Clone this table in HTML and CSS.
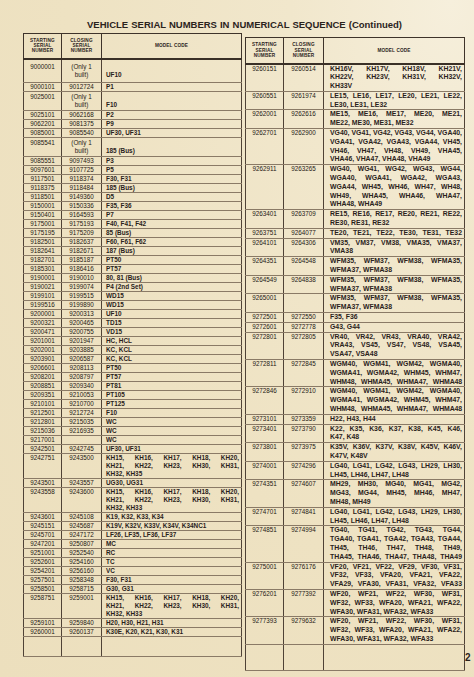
FILE: index.html
```html
<!DOCTYPE html>
<html lang="en">
<head>
<meta charset="utf-8">
<title>Vehicle Serial Numbers in Numerical Sequence (Continued)</title>
<link rel="stylesheet" href="styles.css">
</head>
<body>
<div class="page">
  <h1 class="title">VEHICLE SERIAL NUMBERS IN NUMERICAL SEQUENCE (Continued)</h1>
  <div class="tables">
    <table class="tbl tbl-left">
      <colgroup><col class="c1"><col class="c2"><col></colgroup>
      <thead>
        <tr><th>STARTING<br>SERIAL<br>NUMBER</th><th>CLOSING<br>SERIAL<br>NUMBER</th><th>MODEL CODE</th></tr>
      </thead>
      <tbody>
        <tr class="t1"><td class="sn">9000001</td><td class="sn">(Only 1<br>built)</td><td class="mc bot">UF10</td></tr>
        <tr><td class="sn">9000101</td><td class="sn">9012724</td><td class="mc">P1</td></tr>
        <tr class="t2"><td class="sn">9025001</td><td class="sn">(Only 1<br>built)</td><td class="mc bot">F10</td></tr>
        <tr><td class="sn">9025101</td><td class="sn">9062168</td><td class="mc">P2</td></tr>
        <tr><td class="sn">9062201</td><td class="sn">9081375</td><td class="mc">P9</td></tr>
        <tr><td class="sn">9085001</td><td class="sn">9085540</td><td class="mc">UF30, UF31</td></tr>
        <tr class="t2"><td class="sn">9085541</td><td class="sn">(Only 1<br>built)</td><td class="mc bot">185 (Bus)</td></tr>
        <tr><td class="sn">9085551</td><td class="sn">9097493</td><td class="mc">P3</td></tr>
        <tr><td class="sn">9097601</td><td class="sn">9107725</td><td class="mc">P5</td></tr>
        <tr><td class="sn">9117501</td><td class="sn">9118374</td><td class="mc">F30, F31</td></tr>
        <tr><td class="sn">9118375</td><td class="sn">9118484</td><td class="mc">185 (Bus)</td></tr>
        <tr><td class="sn">9118501</td><td class="sn">9149360</td><td class="mc">D5</td></tr>
        <tr><td class="sn">9150001</td><td class="sn">9150336</td><td class="mc">F35, F36</td></tr>
        <tr><td class="sn">9150401</td><td class="sn">9164593</td><td class="mc">P7</td></tr>
        <tr><td class="sn">9175001</td><td class="sn">9175193</td><td class="mc">F40, F41, F42</td></tr>
        <tr><td class="sn">9175195</td><td class="sn">9175209</td><td class="mc">85 (Bus)</td></tr>
        <tr><td class="sn">9182501</td><td class="sn">9182637</td><td class="mc">F60, F61, F62</td></tr>
        <tr><td class="sn">9182641</td><td class="sn">9182671</td><td class="mc">187 (Bus)</td></tr>
        <tr><td class="sn">9182701</td><td class="sn">9185187</td><td class="mc">PT50</td></tr>
        <tr><td class="sn">9185301</td><td class="sn">9186416</td><td class="mc">PT57</td></tr>
        <tr><td class="sn">9190001</td><td class="sn">9190010</td><td class="mc">80, 81 (Bus)</td></tr>
        <tr><td class="sn">9190021</td><td class="sn">9199074</td><td class="mc">P4 (2nd Set)</td></tr>
        <tr><td class="sn">9199101</td><td class="sn">9199515</td><td class="mc">WD15</td></tr>
        <tr><td class="sn">9199516</td><td class="sn">9199890</td><td class="mc">WD15</td></tr>
        <tr><td class="sn">9200001</td><td class="sn">9200313</td><td class="mc">UF10</td></tr>
        <tr><td class="sn">9200321</td><td class="sn">9200465</td><td class="mc">TD15</td></tr>
        <tr><td class="sn">9200471</td><td class="sn">9200755</td><td class="mc">VD15</td></tr>
        <tr><td class="sn">9201001</td><td class="sn">9201947</td><td class="mc">HC, HCL</td></tr>
        <tr><td class="sn">9202001</td><td class="sn">9203885</td><td class="mc">KC, KCL</td></tr>
        <tr><td class="sn">9203901</td><td class="sn">9206587</td><td class="mc">KC, KCL</td></tr>
        <tr><td class="sn">9206601</td><td class="sn">9208113</td><td class="mc">PT50</td></tr>
        <tr><td class="sn">9208201</td><td class="sn">9208797</td><td class="mc">PT57</td></tr>
        <tr><td class="sn">9208851</td><td class="sn">9209340</td><td class="mc">PT81</td></tr>
        <tr><td class="sn">9209351</td><td class="sn">9210053</td><td class="mc">PT105</td></tr>
        <tr><td class="sn">9210101</td><td class="sn">9210700</td><td class="mc">PT125</td></tr>
        <tr><td class="sn">9212501</td><td class="sn">9212724</td><td class="mc">F10</td></tr>
        <tr><td class="sn">9212801</td><td class="sn">9215035</td><td class="mc">WC</td></tr>
        <tr><td class="sn">9215036</td><td class="sn">9216935</td><td class="mc">WC</td></tr>
        <tr><td class="sn">9217001</td><td class="sn"></td><td class="mc">WC</td></tr>
        <tr><td class="sn">9242501</td><td class="sn">9242745</td><td class="mc">UF30, UF31</td></tr>
        <tr><td class="sn">9242751</td><td class="sn">9243500</td><td class="mc"><span class="l j">KH15, KH16, KH17, KH18, KH20,</span><span class="l j">KH21, KH22, KH23, KH30, KH31,</span><span class="l">KH32, KH35</span></td></tr>
        <tr><td class="sn">9243501</td><td class="sn">9243557</td><td class="mc">UG30, UG31</td></tr>
        <tr><td class="sn">9243558</td><td class="sn">9243600</td><td class="mc"><span class="l j">KH15, KH16, KH17, KH18, KH20,</span><span class="l j">KH21, KH22, KH23, KH30, KH31,</span><span class="l">KH32, KH33</span></td></tr>
        <tr><td class="sn">9243601</td><td class="sn">9245108</td><td class="mc">K19, K32, K33, K34</td></tr>
        <tr><td class="sn">9245151</td><td class="sn">9245687</td><td class="mc">K19V, K32V, K33V, K34V, K34NC1</td></tr>
        <tr><td class="sn">9245701</td><td class="sn">9247172</td><td class="mc">LF26, LF35, LF36, LF37</td></tr>
        <tr><td class="sn">9247201</td><td class="sn">9250807</td><td class="mc">MC</td></tr>
        <tr><td class="sn">9251001</td><td class="sn">9252540</td><td class="mc">RC</td></tr>
        <tr><td class="sn">9252601</td><td class="sn">9254160</td><td class="mc">TC</td></tr>
        <tr><td class="sn">9254201</td><td class="sn">9256160</td><td class="mc">VC</td></tr>
        <tr><td class="sn">9257501</td><td class="sn">9258348</td><td class="mc">F30, F31</td></tr>
        <tr><td class="sn">9258501</td><td class="sn">9258715</td><td class="mc">G30, G31</td></tr>
        <tr><td class="sn">9258751</td><td class="sn">9259001</td><td class="mc"><span class="l j">KH15, KH16, KH17, KH18, KH20,</span><span class="l j">KH21, KH22, KH23, KH30, KH31,</span><span class="l">KH32, KH33</span></td></tr>
        <tr><td class="sn">9259101</td><td class="sn">9259840</td><td class="mc">H20, H30, H21, H31</td></tr>
        <tr><td class="sn">9260001</td><td class="sn">9260137</td><td class="mc">K30E, K20, K21, K30, K31</td></tr>
        <tr class="empty"><td></td><td></td><td></td></tr>
      </tbody>
    </table>

    <table class="tbl tbl-right">
      <colgroup><col class="c1"><col class="c2"><col></colgroup>
      <thead>
        <tr><th>STARTING<br>SERIAL<br>NUMBER</th><th>CLOSING<br>SERIAL<br>NUMBER</th><th>MODEL CODE</th></tr>
      </thead>
      <tbody>
        <tr><td class="sn">9260151</td><td class="sn">9260514</td><td class="mc"><span class="l j">KH16V, KH17V, KH18V, KH21V,</span><span class="l j">KH22V, KH23V, KH31V, KH32V,</span><span class="l">KH33V</span></td></tr>
        <tr><td class="sn">9260551</td><td class="sn">9261974</td><td class="mc"><span class="l j">LE15, LE16, LE17, LE20, LE21, LE22,</span><span class="l">LE30, LE31, LE32</span></td></tr>
        <tr><td class="sn">9262001</td><td class="sn">9262616</td><td class="mc"><span class="l j">ME15, ME16, ME17, ME20, ME21,</span><span class="l">ME22, ME30, ME31, ME32</span></td></tr>
        <tr><td class="sn">9262701</td><td class="sn">9262900</td><td class="mc"><span class="l j">VG40, VG41, VG42, VG43, VG44, VGA40,</span><span class="l j">VGA41, VGA42, VGA43, VGA44, VH45,</span><span class="l j">VH46, VH47, VH48, VH49, VHA45,</span><span class="l">VHA46, VHA47, VHA48, VHA49</span></td></tr>
        <tr><td class="sn">9262911</td><td class="sn">9263265</td><td class="mc"><span class="l j">WG40, WG41, WG42, WG43, WG44,</span><span class="l j">WGA40, WGA41, WGA42, WGA43,</span><span class="l j">WGA44, WH45, WH46, WH47, WH48,</span><span class="l j">WH49, WHA45, WHA46, WHA47,</span><span class="l">WHA48, WHA49</span></td></tr>
        <tr><td class="sn">9263401</td><td class="sn">9263709</td><td class="mc"><span class="l j">RE15, RE16, RE17, RE20, RE21, RE22,</span><span class="l">RE30, RE31, RE32</span></td></tr>
        <tr><td class="sn">9263751</td><td class="sn">9264077</td><td class="mc"><span class="l j">TE20, TE21, TE22, TE30, TE31, TE32</span></td></tr>
        <tr><td class="sn">9264101</td><td class="sn">9264306</td><td class="mc"><span class="l j">VM35, VM37, VM38, VMA35, VMA37,</span><span class="l">VMA38</span></td></tr>
        <tr><td class="sn">9264351</td><td class="sn">9264548</td><td class="mc"><span class="l j">WFM35, WFM37, WFM38, WFMA35,</span><span class="l">WFMA37, WFMA38</span></td></tr>
        <tr><td class="sn">9264549</td><td class="sn">9264838</td><td class="mc"><span class="l j">WFM35, WFM37, WFM38, WFMA35,</span><span class="l">WFMA37, WFMA38</span></td></tr>
        <tr><td class="sn">9265001</td><td class="sn"></td><td class="mc"><span class="l j">WFM35, WFM37, WFM38, WFMA35,</span><span class="l">WFMA37, WFMA38</span></td></tr>
        <tr><td class="sn">9272501</td><td class="sn">9272550</td><td class="mc">F35, F36</td></tr>
        <tr><td class="sn">9272601</td><td class="sn">9272778</td><td class="mc">G43, G44</td></tr>
        <tr><td class="sn">9272801</td><td class="sn">9272805</td><td class="mc"><span class="l j">VR40, VR42, VR43, VRA40, VRA42,</span><span class="l j">VRA43, VS45, VS47, VS48, VSA45,</span><span class="l">VSA47, VSA48</span></td></tr>
        <tr><td class="sn">9272811</td><td class="sn">9272845</td><td class="mc"><span class="l j">WGM40, WGM41, WGM42, WGMA40,</span><span class="l j">WGMA41, WGMA42, WHM45, WHM47,</span><span class="l j tight">WHM48, WHMA45, WHMA47, WHMA48</span></td></tr>
        <tr><td class="sn">9272846</td><td class="sn">9272910</td><td class="mc"><span class="l j">WGM40, WGM41, WGM42, WGMA40,</span><span class="l j">WGMA41, WGMA42, WHM45, WHM47,</span><span class="l j tight">WHM48, WHMA45, WHMA47, WHMA48</span></td></tr>
        <tr><td class="sn">9273101</td><td class="sn">9273359</td><td class="mc">H22, H43, H44</td></tr>
        <tr><td class="sn">9273401</td><td class="sn">9273790</td><td class="mc"><span class="l j">K22, K35, K36, K37, K38, K45, K46,</span><span class="l">K47, K48</span></td></tr>
        <tr><td class="sn">9273801</td><td class="sn">9273975</td><td class="mc"><span class="l j">K35V, K36V, K37V, K38V, K45V, K46V,</span><span class="l">K47V, K48V</span></td></tr>
        <tr><td class="sn">9274001</td><td class="sn">9274296</td><td class="mc"><span class="l j">LG40, LG41, LG42, LG43, LH29, LH30,</span><span class="l">LH45, LH46, LH47, LH48</span></td></tr>
        <tr><td class="sn">9274351</td><td class="sn">9274607</td><td class="mc"><span class="l j">MH29, MH30, MG40, MG41, MG42,</span><span class="l j">MG43, MG44, MH45, MH46, MH47,</span><span class="l">MH48, MH49</span></td></tr>
        <tr><td class="sn">9274701</td><td class="sn">9274841</td><td class="mc"><span class="l j">LG40, LG41, LG42, LG43, LH29, LH30,</span><span class="l">LH45, LH46, LH47, LH48</span></td></tr>
        <tr><td class="sn">9274851</td><td class="sn">9274994</td><td class="mc"><span class="l j">TG40, TG41, TG42, TG43, TG44,</span><span class="l j">TGA40, TGA41, TGA42, TGA43, TGA44,</span><span class="l j">TH45, TH46, TH47, TH48, TH49,</span><span class="l j">THA45, THA46, THA47, THA48, THA49</span></td></tr>
        <tr><td class="sn">9275001</td><td class="sn">9276176</td><td class="mc"><span class="l j">VF20, VF21, VF22, VF29, VF30, VF31,</span><span class="l j">VF32, VF33, VFA20, VFA21, VFA22,</span><span class="l j">VFA29, VFA30, VFA31, VFA32, VFA33</span></td></tr>
        <tr><td class="sn">9276201</td><td class="sn">9277392</td><td class="mc"><span class="l j">WF20, WF21, WF22, WF30, WF31,</span><span class="l j">WF32, WF33, WFA20, WFA21, WFA22,</span><span class="l">WFA30, WFA31, WFA32, WFA33</span></td></tr>
        <tr><td class="sn">9277393</td><td class="sn">9279632</td><td class="mc"><span class="l j">WF20, WF21, WF22, WF30, WF31,</span><span class="l j">WF32, WF33, WFA20, WFA21, WFA22,</span><span class="l">WFA30, WFA31, WFA32, WFA33</span></td></tr>
        <tr class="empty"><td></td><td></td><td></td></tr>
      </tbody>
    </table>
  </div>
  <div class="pgno">2</div>
</div>
</body>
</html>
```

FILE: styles.css
```css
* { box-sizing: border-box; }
html, body { margin: 0; padding: 0; }
body {
  width: 474px;
  height: 677px;
  overflow: hidden;
  background: #eee2c2;
  font-family: "Liberation Sans", Arial, sans-serif;
  color: #2a221b;
}
.page {
  position: relative;
  width: 474px;
  height: 677px;
  background: radial-gradient(ellipse at 95% 0%, #f6efdc 0%, #f1e7cc 25%, #eee2c2 60%, #ecdfbd 100%);
}
.title {
  margin: 0;
  padding: 19px 0 0 87px;
  font-size: 9.5px;
  line-height: 11px;
  font-weight: bold;
  white-space: nowrap;
  word-spacing: 0.4px;
  color: #2b231c;
}
.tables {
  display: flex;
  align-items: flex-start;
  gap: 3px;
  padding-left: 23px;
}
.tbl {
  border-collapse: collapse;
  table-layout: fixed;
  border: 1.5px solid #3a3027;
}
.tbl-left { width: 219px; margin-top: 3px; }
.tbl-right { width: 220px; margin-top: 7px; }
.c1 { width: 38px; }
.c2 { width: 40px; }
.tbl th {
  font-size: 4.7px;
  line-height: 5.4px;
  letter-spacing: 0.15px;
  font-weight: bold;
  text-align: center;
  vertical-align: middle;
  padding: 0;
  border: 1px solid #3e332a;
  border-bottom: 2px solid #3a3027;
  color: #2b231c;
}
.tbl-left th { height: 25px; }
.tbl-right th { height: 26px; }
.tbl td {
  padding: 0;
  vertical-align: top;
  border-top: 1px solid #8a7a66;
  border-bottom: 1px solid #8a7a66;
  border-left: 1px solid #4f4236;
  border-right: 1px solid #4f4236;
}
.tbl-left td { line-height: 8px; }
.tbl-right td { line-height: 8.8px; }
.sn {
  text-align: center;
  font-size: 6.3px;
  color: #1f1914;
}
.mc {
  font-weight: bold;
  font-size: 6.4px;
  padding-left: 4px !important;
  padding-right: 2px !important;
  color: #2a221b;
}
.tbl-right .mc {
  font-size: 6.9px;
  padding-left: 6px !important;
  padding-right: 2px !important;
}
.bot { vertical-align: bottom !important; }
.t1 td { padding-top: 3px; padding-bottom: 3px; }
.t2 td { padding-top: 1px; padding-bottom: 1px; }
.l { display: block; }
.j { text-align: justify; text-align-last: justify; }
.tight { letter-spacing: -0.1px; }
.tbl-left .empty td { height: 20px; }
.tbl-right .empty td { height: 26px; }
.pgno {
  position: absolute;
  left: 465px;
  top: 652px;
  font-size: 10px;
  font-weight: bold;
  color: #2b231c;
}
```
